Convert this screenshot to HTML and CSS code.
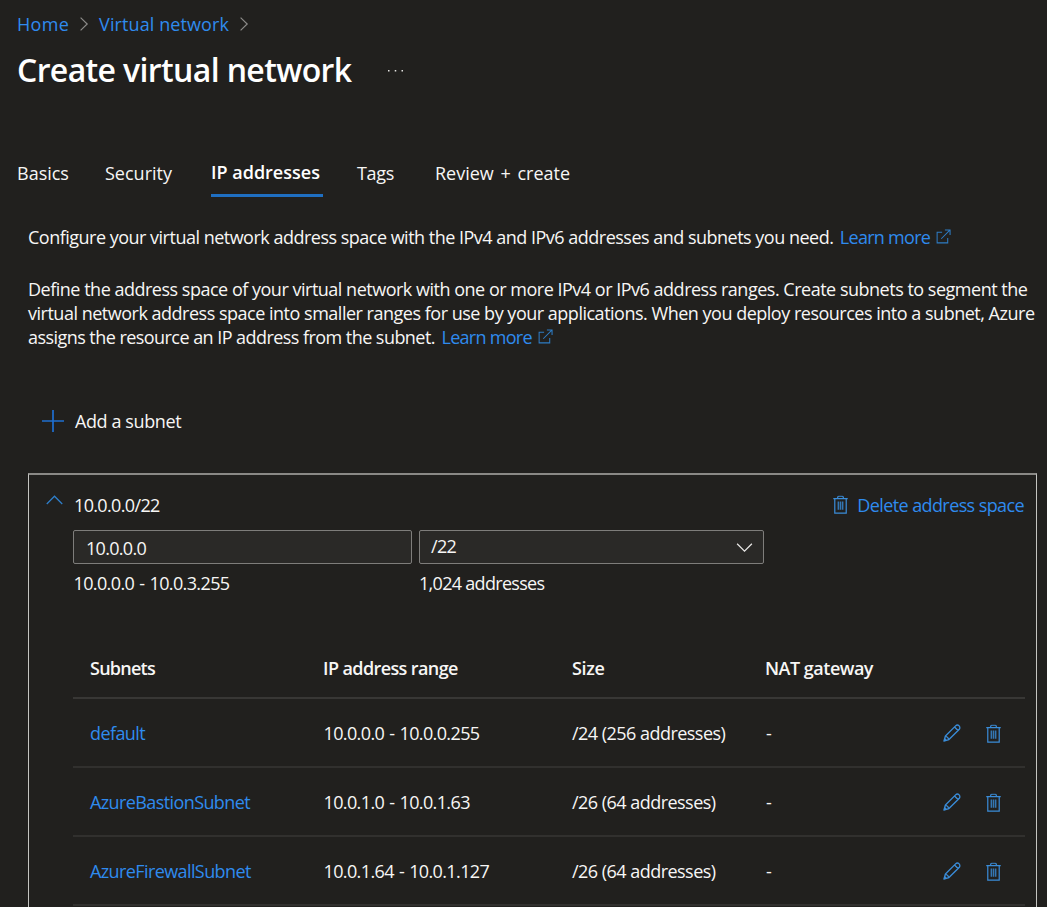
FILE: index.html
```html
<!DOCTYPE html>
<html lang="en">
<head>
<meta charset="utf-8">
<title>Create virtual network</title>
<link rel="stylesheet" href="styles.css">
</head>
<body>
<svg class="defs" width="0" height="0">
  <symbol id="trash" viewBox="0 0 16 20"><g fill="none" stroke="currentColor" stroke-width="1.3"><path d="M.3 3.7h15.4M5 3.6V2.2q0-1 1-1h4q1 0 1 1v1.4M1.9 3.7v15.4h12.2V3.7"/><path d="M5.7 6.8v8.8M8 6.8v8.8M10.3 6.8v8.8" stroke-width="1.6" opacity=".8"/></g></symbol>
  <symbol id="pencil" viewBox="0 0 20 20"><g fill="none" stroke="currentColor" stroke-width="1.5" stroke-linejoin="round"><path d="M1 19l1.7-5.6L14 2.1a2.7 2.7 0 0 1 3.9 3.9L6.6 17.3zM2.7 13.4q2.9.9 3.9 3.9M12.8 3.3l3.9 3.9M1 19l2.4-2.4"/></g></symbol>
  <symbol id="external" viewBox="0 0 16 16"><path d="M6.5 3.5H1.2v11.3h11.3V9.5M9.5 1h5.5v5.5M15 1L5.6 10.4" fill="none" stroke="currentColor" stroke-width="1.1"/></symbol>
</svg>
<nav class="crumbs">
  <a class="c-home">Home</a>
  <svg class="chev" viewBox="0 0 8 14"><path d="M.6.6L7.2 7 .6 13.4"/></svg>
  <a class="c-vnet">Virtual network</a>
  <svg class="chev" viewBox="0 0 8 14"><path d="M.6.6L7.2 7 .6 13.4"/></svg>
</nav>
<header class="title">
  <h1>Create virtual network</h1>
  <svg class="more" viewBox="0 0 16 2"><path d="M0 0h1.6v1.6H0zM7.2 0h1.6v1.6H7.2zM14.4 0H16v1.6h-1.6z"/></svg>
</header>
<nav class="tabs">
  <a class="t-basics">Basics</a>
  <a class="t-security">Security</a>
  <a class="t-ip active"><span>IP addresses</span></a>
  <a class="t-tags">Tags</a>
  <a class="t-review">Review + create</a>
</nav>
<main>
  <p class="intro"><span class="l1">Configure your virtual network address space with the IPv4 and IPv6 addresses and subnets you need.</span><a class="learn"><span>Learn more</span><svg viewBox="0 0 16 16"><use href="#external"/></svg></a></p>
  <div class="detail">
    <p><span class="l2">Define the address space of your virtual network with one or more IPv4 or IPv6 address ranges. Create subnets to segment the</span></p>
    <p><span class="l3">virtual network address space into smaller ranges for use by your applications. When you deploy resources into a subnet, Azure</span></p>
    <p><span class="l4">assigns the resource an IP address from the subnet.</span><a class="learn"><span>Learn more</span><svg viewBox="0 0 16 16"><use href="#external"/></svg></a></p>
  </div>
  <div class="add">
    <svg viewBox="0 0 22 22"><path d="M11 0v22M0 11h22"/></svg>
    <span>Add a subnet</span>
  </div>
  <section class="space">
    <div class="space-head">
      <svg class="collapse" viewBox="0 0 18 10"><path d="M.8 9.2L9 1l8.2 8.2"/></svg>
      <span class="cidr">10.0.0.0/22</span>
      <a class="delete"><svg viewBox="0 0 16 20"><use href="#trash"/></svg><span>Delete address space</span></a>
    </div>
    <div class="fields">
      <div class="field ip"><span>10.0.0.0</span></div>
      <div class="field mask"><span>/22</span><svg viewBox="0 0 18 10"><path d="M.8.8L9 9l8.2-8.2"/></svg></div>
      <div class="hint h-range"><span>10.0.0.0 - 10.0.3.255</span></div>
      <div class="hint h-count"><span>1,024 addresses</span></div>
    </div>
    <div class="table">
      <div class="row head"><span class="b1">Subnets</span><span class="b2">IP address range</span><span class="b3">Size</span><span class="b4">NAT gateway</span></div>
      <div class="row"><a class="name">default</a><span class="num">10.0.0.0 - 10.0.0.255</span><span class="size">/24 (256 addresses)</span><span class="dash">-</span><svg class="pen" viewBox="0 0 20 20"><use href="#pencil"/></svg><svg class="bin" viewBox="0 0 16 20"><use href="#trash"/></svg></div>
      <div class="row"><a class="name">AzureBastionSubnet</a><span class="num">10.0.1.0 - 10.0.1.63</span><span class="size">/26 (64 addresses)</span><span class="dash">-</span><svg class="pen" viewBox="0 0 20 20"><use href="#pencil"/></svg><svg class="bin" viewBox="0 0 16 20"><use href="#trash"/></svg></div>
      <div class="row"><a class="name">AzureFirewallSubnet</a><span class="num">10.0.1.64 - 10.0.1.127</span><span class="size">/26 (64 addresses)</span><span class="dash">-</span><svg class="pen" viewBox="0 0 20 20"><use href="#pencil"/></svg><svg class="bin" viewBox="0 0 16 20"><use href="#trash"/></svg></div>
    </div>
  </section>
</main>
</body>
</html>
```
FILE: styles.css
```css
* { box-sizing: border-box; }
html, body { height: 907px; overflow: hidden; }
body {
  margin: 0;
  background: #21201e;
  color: #f7f6f5;
  font: 18px/24px "Open Sans", "Noto Sans", sans-serif;
  letter-spacing: -0.35px;
  white-space: nowrap;
}
p, h1 { margin: 0; }
svg { display: block; flex: none; fill: none; overflow: visible; }
.defs { position: absolute; }
a { color: #2f8bee; }

.crumbs { display: flex; align-items: center; height: 48px; padding-left: 17px; }
.chev { width: 8px; height: 14px; stroke: #8c8b89; stroke-width: 1.2; margin: 0 11px; }
.c-home { letter-spacing: 0.3px; }
.c-vnet { letter-spacing: 0.1px; }

.title { display: flex; align-items: center; height: 45px; padding-left: 17px; }
h1 { width: 371px; height: 45px; font-size: 32px; line-height: 43px; font-weight: 600; letter-spacing: -0.63px; color: #fff; }
.more { width: 15px; height: 2px; fill: #e5e4e2; }

.tabs { display: flex; margin-top: 56px; height: 48px; padding-left: 17px; letter-spacing: 0; }
.tabs a { color: #f7f6f5; line-height: 49px; }
.t-basics { width: 88px; }
.t-security { width: 106px; }
.t-ip { width: 112px; margin-right: 34px; }
.tabs .active { font-weight: 600; line-height: 47px; border-bottom: 3px solid #1f6fc2; color: #fff; }
.t-tags { width: 78px; letter-spacing: -0.3px; }
.t-review { word-spacing: 2px; }

main { padding-left: 28px; }
.intro { display: flex; margin-top: 28px; }
.l1 { letter-spacing: -0.505px; }
.l2, .l3 { letter-spacing: -0.49px; }
.l4 { letter-spacing: -0.55px; }
.detail { margin-top: 28px; }
.detail p { display: flex; }
.learn { display: flex; align-items: center; margin-left: 6.5px; gap: 6px; letter-spacing: -0.72px; }
.learn svg { width: 15px; height: 15px; margin-top: -1px; color: #2e7cc4; }

.add { display: flex; align-items: center; height: 24px; margin-top: 60px; padding-left: 14px; gap: 11px; letter-spacing: -0.4px; }
.add svg { width: 22px; height: 22px; stroke: #1f6fd0; stroke-width: 1.7; }

.space { width: 1009px; height: 460px; margin-top: 40px; border: 1px solid #c4c4c1; border-top: 2px solid #8a8986; }
.space-head { display: flex; height: 55px; padding: 18px 12px 0 17px; }
.collapse { width: 17px; height: 10px; margin: 2px 11px 0 0; stroke: #2f7fcb; stroke-width: 1.3; }
.cidr { letter-spacing: -0.65px; }
.delete { display: flex; align-items: center; height: 24px; margin-left: auto; gap: 9px; letter-spacing: -0.6px; }
.delete svg { width: 15px; height: 19px; margin-top: -2px; color: #3a8cd8; }
.fields { display: grid; grid-template-columns: 339px 345px; grid-template-rows: 34px 40px; column-gap: 7px; padding-left: 44px; }
.field { display: flex; align-items: center; justify-content: space-between; border: 1px solid #7e7d7b; border-radius: 2px; background: #2a2927; padding: 0 10px 0 12px; letter-spacing: -0.7px; }
.ip { padding-top: 1px; }
.mask { padding-left: 11px; }
.mask span { margin-top: -2px; }
.mask svg { width: 17px; height: 9px; stroke: #e8e7e5; stroke-width: 1.4; }
.hint { line-height: 39px; }
.h-range { padding-left: 0.5px; letter-spacing: -0.62px; word-spacing: 1px; }
.h-count { letter-spacing: -0.7px; }

.table { margin: 36px 11px 0 44px; }
.row { display: grid; grid-template-columns: 233px 249px 193px 178px 43px 1fr; align-items: center; height: 69px; padding: 1px 0 0 17px; border-bottom: 2px solid #31302e; }
.head { height: 59px; padding-top: 0; padding-bottom: 2px; border-bottom-color: #383735; font-weight: 600; }
.b1 { letter-spacing: -0.75px; }
.b2 { letter-spacing: -0.6px; }
.b4 { letter-spacing: -0.5px; }
.name { letter-spacing: -0.6px; }
.num { padding-left: 0.5px; letter-spacing: -0.62px; word-spacing: 1px; }
.size { letter-spacing: -0.53px; }
.dash { padding-left: 1px; }
.pen { width: 18px; height: 18px; color: #3a8cd8; }
.bin { width: 15px; height: 19px; color: #3a8cd8; }
```
